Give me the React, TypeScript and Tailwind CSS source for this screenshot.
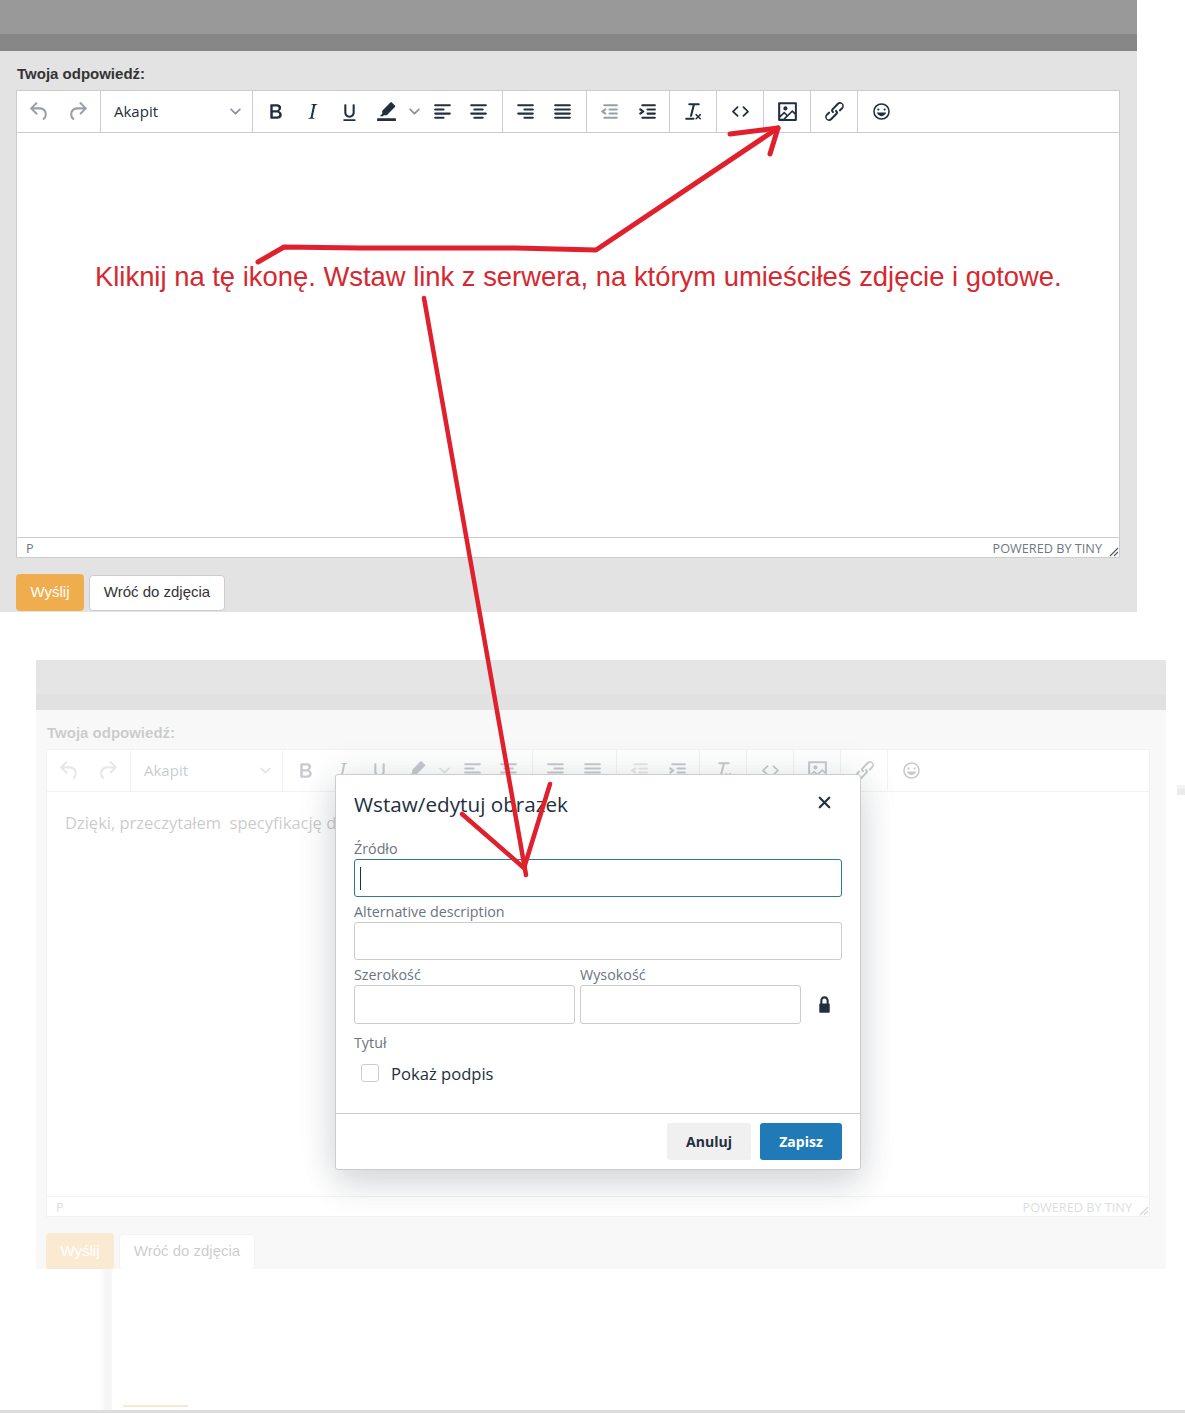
import type { ReactNode } from "react";

const paths = {
  undo: "M6.4 8H12c3.7 0 6.2 2 6.8 5.1.6 2.7-.4 5.6-2.3 6.8a1 1 0 0 1-1-1.8c1.1-.6 1.8-2.7 1.4-4.6-.5-2.1-2.1-3.5-4.9-3.5H6.4l3.3 3.3a1 1 0 1 1-1.4 1.4l-5-5a1 1 0 0 1 0-1.4l5-5a1 1 0 0 1 1.4 1.4L6.4 8Z",
  redo: "M17.6 10H12c-2.8 0-4.4 1.4-4.9 3.5-.4 2 .3 4 1.4 4.6a1 1 0 1 1-1 1.8c-2-1.2-2.9-4.1-2.3-6.8.6-3 3-5.1 6.8-5.1h5.6l-3.3-3.3a1 1 0 1 1 1.4-1.4l5 5a1 1 0 0 1 0 1.4l-5 5a1 1 0 0 1-1.4-1.4l3.3-3.3Z",
  bold: "M7.8 19c-.3 0-.5 0-.6-.2l-.2-.5V5.7c0-.2 0-.4.2-.5l.6-.2h5c1.5 0 2.7.3 3.5 1 .7.6 1.1 1.4 1.1 2.5a3 3 0 0 1-.6 1.9c-.4.6-1 1-1.6 1.2.4.1.9.3 1.3.6s.8.7 1 1.2c.4.4.5 1 .5 1.6 0 1.3-.4 2.3-1.3 3-.8.7-2.1 1-3.8 1H7.8Zm5-8.3c.6 0 1.2-.1 1.6-.5.4-.3.6-.7.6-1.3 0-1.1-.8-1.7-2.3-1.7H9.3v3.5h3.4Zm.5 6c.7 0 1.3-.1 1.7-.4.4-.4.6-.9.6-1.5s-.2-1-.7-1.4c-.4-.3-1-.4-2-.4H9.4v3.8h4Z",
  italic: "M16.7 4.7l-.1.9h-.3c-.6 0-1 0-1.4.3-.3.3-.4.6-.5 1.1l-2.1 9.8v.6c0 .5.4.8 1.4.8h.2l-.2.8H8l.2-.8h.2c1.1 0 1.8-.5 2-1.5l2-9.8.1-.5c0-.6-.4-.8-1.4-.8h-.3l.2-.9h5.8Z",
  underline: "M16 5c.6 0 1 .4 1 1v7c0 2.8-2.2 5-5 5s-5-2.2-5-5V6c0-.6.4-1 1-1s1 .4 1 1v7c0 1.7 1.3 3 3 3s3-1.3 3-3V6c0-.6.4-1 1-1ZM7 19.5h10c.6 0 1 .3 1 .8s-.4.7-1 .7H7c-.6 0-1-.3-1-.7s.4-.8 1-.8Z",
  highlight: "M15.7 3.3a1 1 0 0 1 1.4 0l3 3a1 1 0 0 1 0 1.4l-7.6 7.6a1 1 0 0 1-.7.3H9.5l-1 1H5.5l2.4-2.5v-2.3a1 1 0 0 1 .3-.7ZM3 18.5h18V21H3Z",
  outdent: "M7 5h12c.6 0 1 .4 1 1s-.4 1-1 1H7a1 1 0 1 1 0-2Zm5 4h7c.6 0 1 .4 1 1s-.4 1-1 1h-7a1 1 0 0 1 0-2Zm0 4h7c.6 0 1 .4 1 1s-.4 1-1 1h-7a1 1 0 0 1 0-2Zm-5 4h12a1 1 0 0 1 0 2H7a1 1 0 0 1 0-2Zm1.6-3.8a1 1 0 0 1-1.2 1.6l-3-2a1 1 0 0 1 0-1.6l3-2a1 1 0 0 1 1.2 1.6L6.8 12l1.8 1.2Z",
  indent: "M7 5h12c.6 0 1 .4 1 1s-.4 1-1 1H7a1 1 0 1 1 0-2Zm5 4h7c.6 0 1 .4 1 1s-.4 1-1 1h-7a1 1 0 0 1 0-2Zm0 4h7c.6 0 1 .4 1 1s-.4 1-1 1h-7a1 1 0 0 1 0-2Zm-5 4h12a1 1 0 0 1 0 2H7a1 1 0 0 1 0-2Zm-2.6-3.8L6.2 12l-1.8-1.2a1 1 0 0 1 1.2-1.6l3 2a1 1 0 0 1 0 1.6l-3 2a1 1 0 1 1-1.2-1.6Z",
  clear: "M13.2 6a1 1 0 0 1 0 .2l-2.6 10a1 1 0 0 1-1 .8h-.2a.8.8 0 0 1-.8-1l2.6-10H8a1 1 0 1 1 0-2h9a1 1 0 0 1 0 2h-3.8ZM5 18h7a1 1 0 0 1 0 2H5a1 1 0 0 1 0-2Zm13 1.5L16.5 18 15 19.5a.7.7 0 0 1-1-1l1.5-1.5-1.5-1.5a.7.7 0 0 1 1-1l1.5 1.5 1.5-1.5a.7.7 0 0 1 1 1L17.5 17l1.5 1.5a.7.7 0 0 1-1 1Z",
  code: "M9.8 15.7c.3.3.3.8 0 1-.3.4-.9.4-1.2 0l-4.4-4.1a.8.8 0 0 1 0-1.2l4.4-4.2c.3-.3.9-.3 1.2 0 .3.3.3.8 0 1.1L6 12l3.8 3.7ZM14.2 15.7c-.3.3-.3.8 0 1 .4.4.9.4 1.2 0l4.4-4.1c.3-.3.3-.9 0-1.2l-4.4-4.2a.8.8 0 0 0-1.2 0c-.3.3-.3.8 0 1.1L18 12l-3.8 3.7Z",
  image: "M5 15.7l3.3-3.2c.3-.3.7-.3 1 0L12 15l4.1-4c.3-.4.8-.4 1 0l2 1.9V5H5v10.7ZM5 18V19h3l2.8-2.9-2-2L5 17.9Zm14-3l-2.5-2.4-6.4 6.5H19v-4ZM4 3h16c.6 0 1 .4 1 1v16c0 .6-.4 1-1 1H4a1 1 0 0 1-1-1V4c0-.6.4-1 1-1Zm6 8a2 2 0 1 0 0-4 2 2 0 0 0 0 4Z",
  link: "M6.2 12.3a1 1 0 0 1 1.4 1.4l-2 2a2 2 0 1 0 2.6 2.8l4.8-4.8a1 1 0 0 0 0-1.4 1 1 0 1 1 1.4-1.3 2.9 2.9 0 0 1 0 4L9.6 20a3.9 3.9 0 0 1-5.5-5.5l2-2Zm11.6-.6a1 1 0 0 1-1.4-1.4l2-2a2 2 0 1 0-2.6-2.8L11 10.3a1 1 0 0 0 0 1.4 1 1 0 1 1-1.4 1.3 2.9 2.9 0 0 1 0-4L14.4 4a3.9 3.9 0 0 1 5.5 5.5l-2 2Z",
  emoji: "M9 11c.6 0 1-.4 1-1s-.4-1-1-1a1 1 0 0 0-1 1c0 .6.4 1 1 1Zm6 0c.6 0 1-.4 1-1s-.4-1-1-1a1 1 0 0 0-1 1c0 .6.4 1 1 1Zm-3 5.5c2.1 0 4-1.5 4.4-3.5H7.6c.5 2 2.3 3.5 4.4 3.5ZM12 4a8 8 0 1 0 0 16 8 8 0 0 0 0-16Zm0 14.5a6.5 6.5 0 1 1 0-13 6.5 6.5 0 0 1 0 13Z",
  lock: "M16.3 11c.2 0 .3 0 .5.2l.2.6v7.4c0 .5-.3.8-.7.8H7.7c-.4 0-.7-.3-.7-.8v-7.4c0-.2 0-.4.2-.6l.5-.2H8V8c0-.8.3-1.5.7-2.1.5-.7 1-1.2 1.7-1.5a4 4 0 0 1 3.2 0c.7.3 1.2.8 1.7 1.5.4.6.7 1.3.7 2.1v3h.3ZM10 8v3h4V8a1 1 0 0 0-.3-.7A2 2 0 0 0 12 6.2a2 2 0 0 0-1.7 1.1 1 1 0 0 0-.3.7Z",
  close: "M17.3 8.2L13.4 12l3.9 3.8a1 1 0 0 1-1.5 1.5L12 13.4l-3.8 3.9a1 1 0 0 1-1.5-1.5l3.9-3.8-3.9-3.8a1 1 0 0 1 1.5-1.5l3.8 3.9 3.8-3.9a1 1 0 0 1 1.5 1.5Z",
  alignLeft: "M5 5h14a1 1 0 0 1 0 2H5a1 1 0 1 1 0-2Zm0 4h8a1 1 0 0 1 0 2H5a1 1 0 1 1 0-2Zm0 4h14a1 1 0 0 1 0 2H5a1 1 0 0 1 0-2Zm0 4h8a1 1 0 0 1 0 2H5a1 1 0 0 1 0-2Z",
  alignCenter: "M5 5h14a1 1 0 0 1 0 2H5a1 1 0 1 1 0-2Zm3 4h8a1 1 0 0 1 0 2H8a1 1 0 1 1 0-2Zm-3 4h14a1 1 0 0 1 0 2H5a1 1 0 0 1 0-2Zm3 4h8a1 1 0 0 1 0 2H8a1 1 0 0 1 0-2Z",
  alignRight: "M5 5h14a1 1 0 0 1 0 2H5a1 1 0 1 1 0-2Zm6 4h8a1 1 0 0 1 0 2h-8a1 1 0 0 1 0-2Zm-6 4h14a1 1 0 0 1 0 2H5a1 1 0 0 1 0-2Zm6 4h8a1 1 0 0 1 0 2h-8a1 1 0 0 1 0-2Z",
  justify: "M5 5h14a1 1 0 0 1 0 2H5a1 1 0 1 1 0-2Zm0 4h14a1 1 0 0 1 0 2H5a1 1 0 1 1 0-2Zm0 4h14a1 1 0 0 1 0 2H5a1 1 0 0 1 0-2Zm0 4h14a1 1 0 0 1 0 2H5a1 1 0 0 1 0-2Z",
};

type IconName = keyof typeof paths;

function Icon({ name, className = "" }: { name: IconName; className?: string }) {
  return (
    <svg viewBox="0 0 24 24" className={`w-[25px] h-[25px] fill-[#222f3e] ${className}`}>
      <path d={paths[name]} />
    </svg>
  );
}

function Chevron({ className = "" }: { className?: string }) {
  return (
    <svg viewBox="0 0 10 6" className={`w-[11px] h-[7px] ${className}`}>
      <path d="M1 1l4 4 4-4" fill="none" stroke="#8a929b" strokeWidth="1.5" strokeLinecap="round" strokeLinejoin="round" />
    </svg>
  );
}

function Tool({ name, w = "w-[37px]", dim = false }: { name: IconName; w?: string; dim?: boolean }) {
  return (
    <div className={`${w} h-full flex items-center justify-center`}>
      <Icon name={name} className={dim ? "opacity-45" : ""} />
    </div>
  );
}

function Toolbar() {
  return (
    <div className="flex h-[42px] border-b border-[#cccccc]">
      <div className="w-[84px] pl-[3px] flex border-r border-[#cccccc]">
        <Tool name="undo" w="w-[38.5px]" dim />
        <Tool name="redo" w="w-[38.5px]" dim />
      </div>
      <div className="w-[152px] pl-[13px] pr-[11px] flex items-center justify-between border-r border-[#cccccc] text-[15px] text-[#222f3e]">
        <span>Akapit</span>
        <Chevron />
      </div>
      <div className="w-[250px] pl-[4px] flex border-r border-[#cccccc]">
        <Tool name="bold" />
        <Tool name="italic" />
        <Tool name="underline" />
        <Tool name="highlight" />
        <div className="w-[19px] h-full flex items-center justify-center">
          <Chevron />
        </div>
        <Tool name="alignLeft" w="w-[36px]" />
        <Tool name="alignCenter" w="w-[36px]" />
      </div>
      <div className="w-[84px] pl-[3px] flex border-r border-[#cccccc]">
        <Tool name="alignRight" w="w-[38px]" />
        <Tool name="justify" w="w-[37px]" />
      </div>
      <div className="w-[83px] pl-[3px] flex border-r border-[#cccccc]">
        <Tool name="outdent" w="w-[38px]" dim />
        <Tool name="indent" w="w-[38px]" />
      </div>
      <div className="w-[47px] border-r border-[#cccccc]">
        <Tool name="clear" w="w-full" />
      </div>
      <div className="w-[47px] border-r border-[#cccccc]">
        <Tool name="code" w="w-full" />
      </div>
      <div className="w-[47px] border-r border-[#cccccc]">
        <Tool name="image" w="w-full" />
      </div>
      <div className="w-[47px] border-r border-[#cccccc]">
        <Tool name="link" w="w-full" />
      </div>
      <div className="w-[47px]">
        <Tool name="emoji" w="w-full" />
      </div>
    </div>
  );
}

function StatusBar() {
  return (
    <div className="h-[20px] pt-[2px] pl-[9px] pr-[17px] flex items-center justify-between border-t border-[#cccccc] text-[12.7px] text-[#6f7782]">
      <span>P</span>
      <span>POWERED BY TINY</span>
      <svg viewBox="0 0 10 10" className="absolute right-0 bottom-0 w-[10px] h-[10px]">
        <path d="M9 1L1 9M9 5L5 9" stroke="#555f6b" strokeWidth="1.2" fill="none" />
      </svg>
    </div>
  );
}

function Panel({
  bandClass,
  bodyClass,
  children,
}: {
  bandClass: string;
  bodyClass: string;
  children: ReactNode;
}) {
  return (
    <>
      <div className="h-[34px] shrink-0 bg-[#999999]" />
      <div className={`shrink-0 bg-[#878787] ${bandClass}`} />
      <div className={`flex-1 bg-[#e3e3e3] ${bodyClass}`}>
        <div className="pl-px h-[25px] font-['Liberation_Sans',sans-serif] text-[15px] leading-[17px] font-bold text-[#333333]">
          Twoja odpowiedź:
        </div>
        <div className="relative h-[468px] flex flex-col bg-white border border-[#cccccc] font-['Open_Sans',sans-serif]">
          <Toolbar />
          <div className="flex-1">{children}</div>
          <StatusBar />
        </div>
        <div className="mt-[16px] flex items-center gap-[5px] font-['Liberation_Sans',sans-serif] text-[15px]">
          <button className="w-[68px] h-[37px] rounded-[4px] bg-[#f0ad4e] text-white">Wyślij</button>
          <button className="w-[136px] h-[36px] rounded-[4px] bg-white border border-[#cccccc] text-[#333333]">
            Wróć do zdjęcia
          </button>
        </div>
      </div>
    </>
  );
}

function Field({
  label,
  caret = false,
  className = "",
  inputClass = "h-[38px]",
}: {
  label: string;
  caret?: boolean;
  className?: string;
  inputClass?: string;
}) {
  return (
    <div className={className}>
      <div className="h-[18px] text-[14.3px] leading-[16px] text-[#6b7480]">{label}</div>
      <div
        className={`rounded-[3px] border flex items-center pl-[5px] ${inputClass} ${
          caret ? "border-[#2f7a92]" : "border-[#cccccc]"
        }`}
      >
        {caret && <div className="w-px h-[23px] bg-[#222f3e]" />}
      </div>
    </div>
  );
}

function ImageDialog() {
  return (
    <div className="absolute left-[299px] top-[114px] w-[526px] h-[396px] flex flex-col bg-white border border-[#cccccc] rounded-[3px] shadow-[0_16px_32px_rgba(34,47,62,0.14),0_0_40px_rgba(34,47,62,0.1)] font-['Open_Sans',sans-serif] text-[#222f3e]">
      <div className="h-[66px] pl-[18px] pr-[23px] pt-[14px] flex items-start justify-between">
        <span className="text-[20.7px] leading-[30px]">Wstaw/edytuj obrazek</span>
        <Icon name="close" className="mt-px" />
      </div>
      <div className="flex-1 px-[18px]">
        <Field label="Źródło" caret />
        <Field label="Alternative description" className="mt-[7px]" />
        <div className="mt-[7px] flex items-end gap-[5px]">
          <Field label="Szerokość" className="w-[221px]" inputClass="h-[39px]" />
          <Field label="Wysokość" className="w-[221px]" inputClass="h-[39px]" />
          <div className="h-[39px] flex-1 flex items-center justify-center">
            <Icon name="lock" />
          </div>
        </div>
        <div className="mt-[10px] text-[14.3px] leading-[18px] text-[#6b7480]">Tytuł</div>
        <div className="mt-[12px] pl-[7px] flex items-center gap-[12px]">
          <div className="w-[18px] h-[18px] mb-[2px] rounded-[3px] border border-[#cccccc]" />
          <span className="text-[16.6px] leading-[20px]">Pokaż podpis</span>
        </div>
      </div>
      <div className="h-[56px] pr-[18px] flex items-center justify-end gap-[9px] border-t border-[#cccccc] text-[14px] font-bold">
        <button className="w-[84px] h-[37px] rounded-[3px] bg-[#f0f0f0]">Anuluj</button>
        <button className="w-[82px] h-[37px] rounded-[3px] bg-[#207ab7] text-white">Zapisz</button>
      </div>
    </div>
  );
}

export default function App() {
  return (
    <div className="relative w-[1185px] h-[1413px] flex flex-col overflow-hidden bg-white">
      <section className="w-[1137px] h-[612px] shrink-0 flex flex-col overflow-hidden">
        <Panel bandClass="h-[17px]" bodyClass="pl-[16px] pr-[17px] pt-[14px]">
          <div className="pl-[78px] pt-[128px] font-['Liberation_Sans',sans-serif] text-[27.4px] leading-[32px] text-[#d5282f] whitespace-nowrap">
            Kliknij na tę ikonę. Wstaw link z serwera, na którym umieściłeś zdjęcie i gotowe.
          </div>
        </Panel>
      </section>

      <section className="relative mt-[48px] ml-[36px] w-[1130px] h-[609px] shrink-0 flex flex-col overflow-hidden">
        <Panel bandClass="h-[16px]" bodyClass="pl-[10px] pr-[16px] pt-[14px]">
          <div className="pl-[18px] pt-[19px] text-[16.5px] leading-[24px] text-[#333333] whitespace-pre">
            Dzięki, przeczytałem  specyfikację dokładnie
          </div>
        </Panel>
        <div className="absolute inset-0 bg-white/75" />
        <ImageDialog />
      </section>

      <div className="flex-1 flex items-end">
        <div className="ml-[100px] w-[12px] h-full bg-gradient-to-r from-white via-[#f5f5f5] to-[#f7f7f7]" />
        <div className="ml-[11px] mb-[3px] w-[65px] h-[2px] bg-[#f9e8d0]" />
      </div>
      <div className="h-[3px] shrink-0 bg-[#dddddd]" />

      <div className="absolute left-[1177px] top-[785px] w-[8px] h-[10px] bg-[#ececec] border-t-[4px] border-[#f3f3f3]" />

      <svg viewBox="0 0 1185 1413" className="absolute inset-0 w-full h-full pointer-events-none">
        <g fill="none" stroke="#e0202c" strokeLinecap="round" strokeLinejoin="round" strokeWidth="5">
          <path d="M258 262L284 247L360 248L516 248L596 250L778 128" />
          <path d="M730 134L778 128L770 154" />
          <path d="M424 298L526 875" strokeWidth="4.5" />
          <path d="M462 814L524 868L550 784" strokeWidth="4.5" />
        </g>
      </svg>
    </div>
  );
}
